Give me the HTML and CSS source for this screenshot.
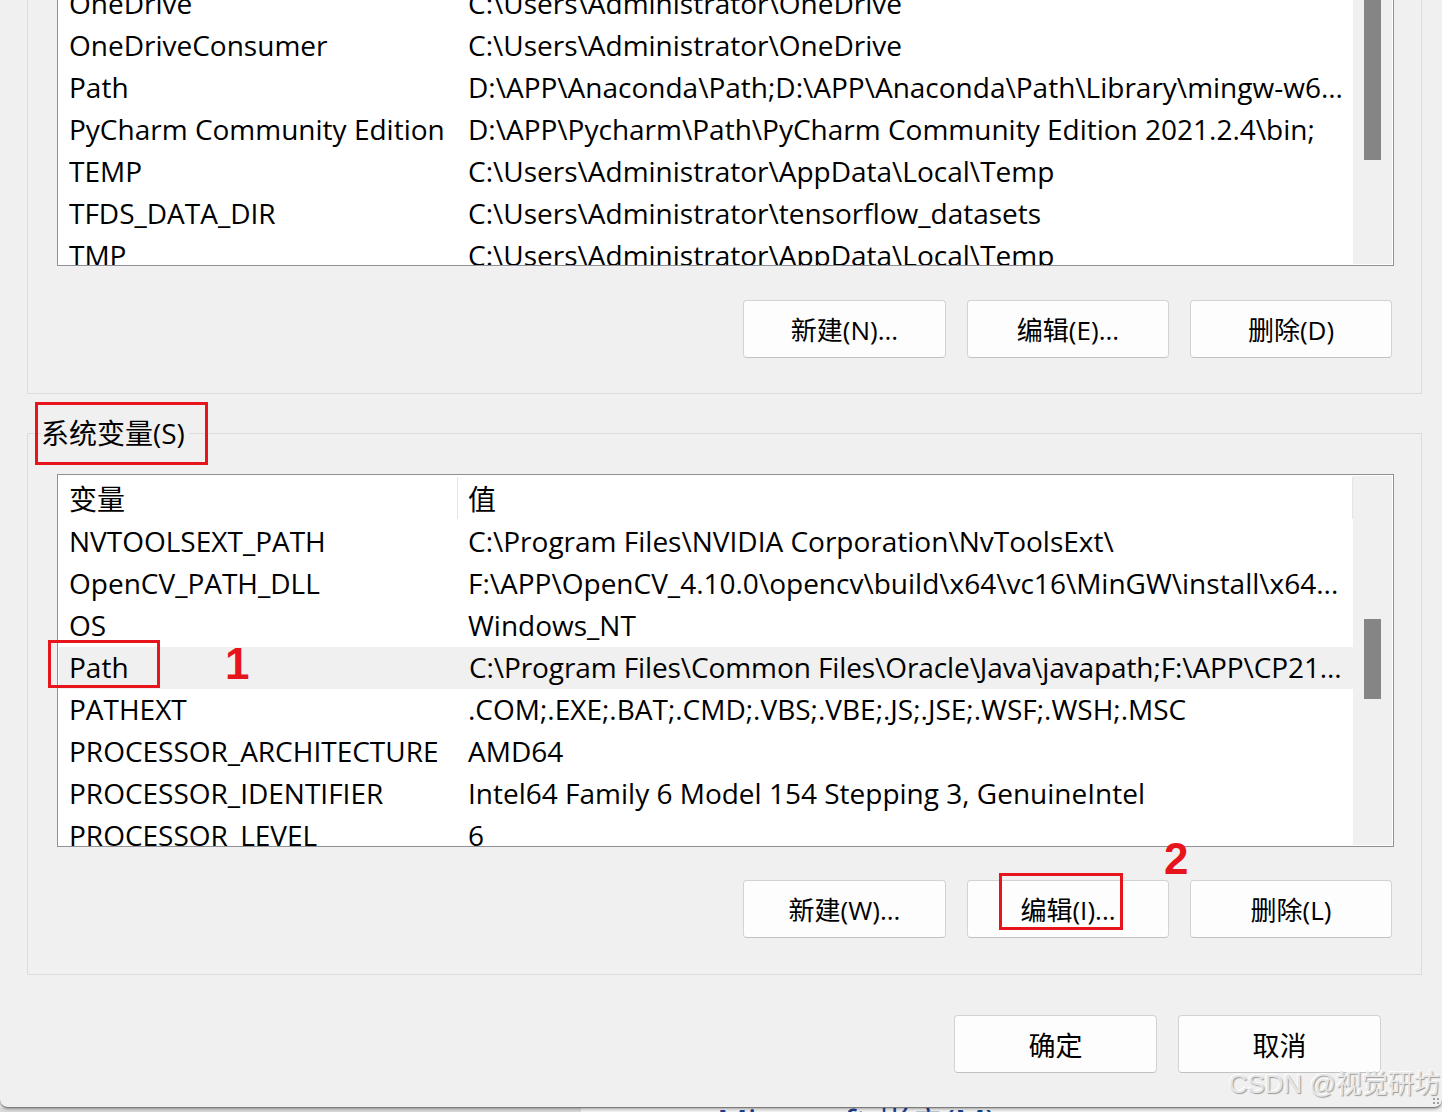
FILE: index.html
```html
<!DOCTYPE html>
<html lang="zh-CN">
<head>
<meta charset="utf-8">
<title>环境变量</title>
<link rel="stylesheet" href="styles.css">
</head>
<body>
<div class="window">
  <div class="content">
    <section class="group group-user">
      <div class="listbox listbox-user">
        <div class="rows rows-user">
          <div class="row"><div class="cell c1">OneDrive</div><div class="cell c2">C:\Users\Administrator\OneDrive</div></div>
          <div class="row"><div class="cell c1">OneDriveConsumer</div><div class="cell c2">C:\Users\Administrator\OneDrive</div></div>
          <div class="row"><div class="cell c1">Path</div><div class="cell c2">D:\APP\Anaconda\Path;D:\APP\Anaconda\Path\Library\mingw-w6...</div></div>
          <div class="row"><div class="cell c1">PyCharm Community Edition</div><div class="cell c2">D:\APP\Pycharm\Path\PyCharm Community Edition 2021.2.4\bin;</div></div>
          <div class="row"><div class="cell c1">TEMP</div><div class="cell c2">C:\Users\Administrator\AppData\Local\Temp</div></div>
          <div class="row"><div class="cell c1">TFDS_DATA_DIR</div><div class="cell c2">C:\Users\Administrator\tensorflow_datasets</div></div>
          <div class="row"><div class="cell c1">TMP</div><div class="cell c2">C:\Users\Administrator\AppData\Local\Temp</div></div>
        </div>
        <div class="vscroll"><div class="thumb thumb-user"></div></div>
      </div>
      <div class="btn-row">
        <button class="btn">新建(N)...</button>
        <button class="btn">编辑(E)...</button>
        <button class="btn">删除(D)</button>
      </div>
    </section>

    <fieldset class="group group-sys">
      <legend class="group-label">系统变量(S)</legend>
      <div class="listbox listbox-sys">
        <div class="rows rows-sys">
          <div class="row head"><div class="cell c1">变量</div><div class="cell c2">值</div></div>
          <div class="row"><div class="cell c1">NVTOOLSEXT_PATH</div><div class="cell c2">C:\Program Files\NVIDIA Corporation\NvToolsExt\</div></div>
          <div class="row"><div class="cell c1">OpenCV_PATH_DLL</div><div class="cell c2">F:\APP\OpenCV_4.10.0\opencv\build\x64\vc16\MinGW\install\x64...</div></div>
          <div class="row"><div class="cell c1">OS</div><div class="cell c2">Windows_NT</div></div>
          <div class="row selected"><div class="cell c1">Path</div><div class="cell c2">C:\Program Files\Common Files\Oracle\Java\javapath;F:\APP\CP21...</div></div>
          <div class="row"><div class="cell c1">PATHEXT</div><div class="cell c2">.COM;.EXE;.BAT;.CMD;.VBS;.VBE;.JS;.JSE;.WSF;.WSH;.MSC</div></div>
          <div class="row"><div class="cell c1">PROCESSOR_ARCHITECTURE</div><div class="cell c2">AMD64</div></div>
          <div class="row"><div class="cell c1">PROCESSOR_IDENTIFIER</div><div class="cell c2">Intel64 Family 6 Model 154 Stepping 3, GenuineIntel</div></div>
          <div class="row"><div class="cell c1">PROCESSOR_LEVEL</div><div class="cell c2">6</div></div>
        </div>
        <div class="vscroll"><div class="thumb thumb-sys"></div></div>
      </div>
      <div class="btn-row btn-row-sys">
        <button class="btn">新建(W)...</button>
        <button class="btn">编辑(I)...</button>
        <button class="btn">删除(L)</button>
      </div>
    </fieldset>

    <div class="dialog-buttons">
      <button class="btn">确定</button>
      <button class="btn">取消</button>
    </div>
  </div>

  <div class="mark mark-label"></div>
  <div class="mark mark-path"></div>
  <div class="mark mark-edit"></div>
  <div class="num num-1">1</div>
  <div class="num num-2">2</div>
  <div class="watermark">CSDN @视觉研坊</div>
  <div class="grip"></div>
</div>
<div class="below"><span class="below-text">Microsoft 帐户(M)</span></div>
</body>
</html>
```

FILE: styles.css
```css
* { box-sizing: border-box; }

html, body {
  margin: 0;
  padding: 0;
}

body {
  width: 1442px;
  height: 1112px;
  overflow: hidden;
  background: #e9e9e9;
  font-family: "Open Sans", "Noto Sans CJK SC", sans-serif;
  color: #000;
}

.window {
  position: relative;
  height: 1108px;
  background: #f0f0f0;
  border-bottom: 1px solid #7d7d7d;
  border-radius: 0 0 8px 8px;
  overflow: hidden;
  box-shadow: 0 1px 3px rgba(0, 0, 0, 0.35);
}

.content {
  margin-top: -60px;
}

/* group boxes */
.group {
  width: 1395px;
  border: 1px solid #dcdcdc;
  margin: 0 0 0 27px;
}

.group-user {
  padding: 19px 0 35px 0;
}

.group-sys {
  margin-top: 19px;
  padding: 0 0 36px 0;
  min-inline-size: 0;
}

.group-label {
  font-size: 28px;
  line-height: 40px;
  padding: 0 4px 0 0;
  margin-left: 13px;
}

/* list views */
.listbox {
  margin: 0 27px 0 29px;
  border: 1px solid #8f9196;
  background: #fff;
  display: flex;
}

.listbox-user {
  height: 306px;
}

.listbox-sys {
  margin-top: 21px;
  height: 373px;
}

.rows {
  flex: 1;
  min-width: 0;
  overflow: hidden;
  font-size: 28px;
}

.rows-user {
  padding-top: 22px;
}

.row {
  display: grid;
  grid-template-columns: 400px 1fr;
  height: 42px;
  line-height: 40px;
  white-space: nowrap;
}

.row.head {
  height: 46px;
  line-height: 46px;
}

.row.head .cell {
  border-right: 1px solid #e5e5e5;
  margin: 2px 0;
  line-height: 44px;
}

.row.selected {
  background: #f0f0f0;
  margin-left: 1px;
}

.cell {
  overflow: hidden;
  text-overflow: ellipsis;
}

.c1 { padding-left: 11px; }
.c2 { padding-left: 10px; padding-right: 0; }

.row.selected .c1 { padding-left: 10px; }
.row.selected .c2 { letter-spacing: -0.1px; }

/* scrollbars */
.vscroll {
  width: 39px;
  margin: 1px 1px 1px 0;
  background: #f0f0f0;
  display: flex;
  flex-direction: column;
}

.thumb {
  width: 17px;
  margin-left: 11px;
  background: #858585;
}

.thumb-user {
  margin-top: 21px;
  height: 177px;
}

.thumb-sys {
  margin-top: 143px;
  height: 80px;
}

/* buttons */
.btn-row {
  display: flex;
  justify-content: flex-end;
  gap: 21px;
  padding-right: 29px;
  margin-top: 34px;
}

.btn-row-sys {
  margin-top: 33px;
}

.btn {
  width: 202px;
  height: 58px;
  padding: 0;
  background: #fdfdfd;
  border: 1px solid #d3d3d3;
  border-bottom-color: #c2c2c2;
  border-radius: 4px;
  font-family: inherit;
  font-size: 26px;
  color: #000;
  display: flex;
  align-items: center;
  justify-content: center;
}

.btn-row .btn:first-child {
  width: 203px;
}

.dialog-buttons {
  display: flex;
  justify-content: flex-end;
  gap: 21px;
  padding-right: 61px;
  margin-top: 40px;
}

.dialog-buttons .btn {
  width: 203px;
  font-size: 27px;
}

/* annotations */
.mark {
  position: absolute;
  border: 3px solid #e8141c;
}

.mark-label { left: 35px; top: 402px; width: 173px; height: 63px; }
.mark-path  { left: 48px; top: 640px; width: 112px; height: 48px; }
.mark-edit  { left: 999px; top: 873px; width: 124px; height: 57px; }

.num {
  position: absolute;
  font-family: "Liberation Sans", Arial, sans-serif;
  font-weight: bold;
  font-size: 44px;
  line-height: 44px;
  color: #e8141c;
}

.num-1 { left: 225px; top: 642px; }
.num-2 { left: 1164px; top: 837px; }

.watermark {
  position: absolute;
  right: 2px;
  top: 1067px;
  font-family: "Liberation Sans", "Noto Sans CJK SC", sans-serif;
  font-size: 26px;
  line-height: 34px;
  color: #e6e6e6;
  text-shadow: 1px 1px 1px #9a9a9a, -1px -1px 0 #fff;
  white-space: nowrap;
}

.grip {
  position: absolute;
  right: 2px;
  bottom: 2px;
  width: 8px;
  height: 8px;
  background: radial-gradient(circle, #a0a0a0 1px, transparent 1.5px) 0 0 / 4px 4px;
}

.below {
  height: 4px;
  overflow: hidden;
  background: linear-gradient(to right, #d9d9d9 0, #d9d9d9 581px, #f2f2f2 581px);
}

.below-text {
  display: block;
  margin-top: -3px;
  padding-left: 717px;
  font-family: "Noto Sans", "Noto Sans CJK SC", sans-serif;
  font-size: 34px;
  line-height: 34px;
  color: #1b3f8b;
  white-space: nowrap;
}
```
